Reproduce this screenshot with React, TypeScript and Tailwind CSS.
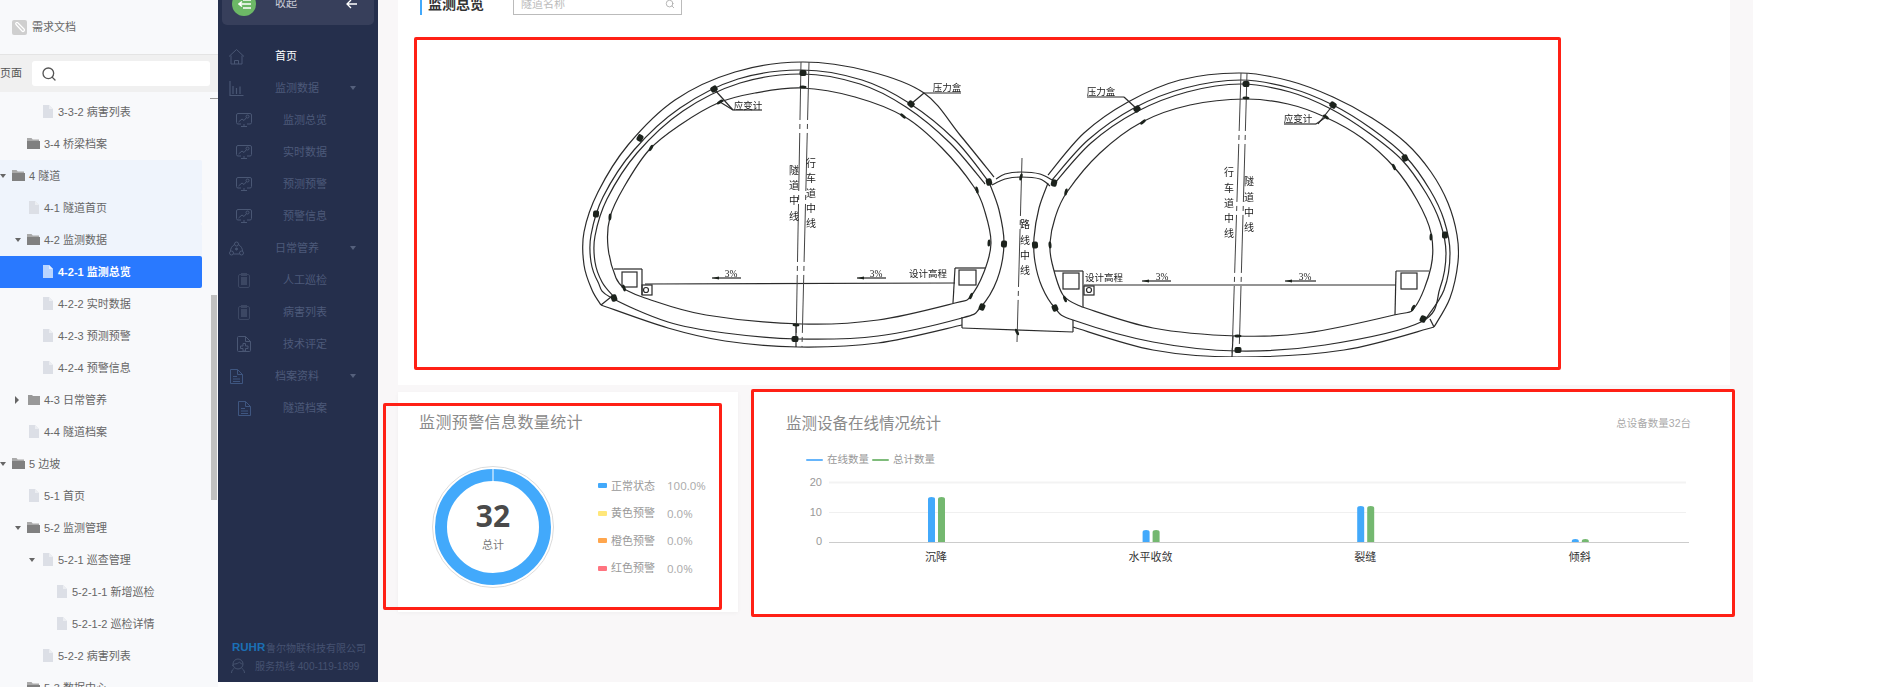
import React from 'react';
import { Search } from 'lucide-react';

const FONT = '"Liberation Sans", "Noto Sans CJK SC", sans-serif';
const SIDE = '#4a5774';

type TreeRow = {
  label: string;
  depth: number;
  kind: 'folder' | 'closed' | 'doc';
  caret?: 'down' | 'right';
  tint?: boolean;
  active?: boolean;
};

const treeRows: TreeRow[] = [
  { label: '3-3-2 病害列表', depth: 2, kind: 'doc' },
  { label: '3-4 桥梁档案', depth: 1, kind: 'folder' },
  { label: '4 隧道', depth: 0, kind: 'folder', caret: 'down', tint: true },
  { label: '4-1 隧道首页', depth: 1, kind: 'doc', tint: true },
  { label: '4-2 监测数据', depth: 1, kind: 'folder', caret: 'down', tint: true },
  { label: '4-2-1 监测总览', depth: 2, kind: 'doc', active: true },
  { label: '4-2-2 实时数据', depth: 2, kind: 'doc' },
  { label: '4-2-3 预测预警', depth: 2, kind: 'doc' },
  { label: '4-2-4 预警信息', depth: 2, kind: 'doc' },
  { label: '4-3 日常管养', depth: 1, kind: 'closed', caret: 'right' },
  { label: '4-4 隧道档案', depth: 1, kind: 'doc' },
  { label: '5 边坡', depth: 0, kind: 'folder', caret: 'down' },
  { label: '5-1 首页', depth: 1, kind: 'doc' },
  { label: '5-2 监测管理', depth: 1, kind: 'folder', caret: 'down' },
  { label: '5-2-1 巡查管理', depth: 2, kind: 'doc', caret: 'down' },
  { label: '5-2-1-1 新增巡检', depth: 3, kind: 'doc' },
  { label: '5-2-1-2 巡检详情', depth: 3, kind: 'doc' },
  { label: '5-2-2 病害列表', depth: 2, kind: 'doc' },
  { label: '5-3 数据中心', depth: 1, kind: 'folder' },
];

const depthClass = ['w-[29px]', 'w-[44px]', 'w-[58px]', 'w-[72px]'];

const TreeIcon = ({ kind, active }: { kind: TreeRow['kind']; active?: boolean }) => {
  if (kind === 'doc') {
    return (
      <svg width="10" height="13" viewBox="0 0 10 13" className="absolute right-[5px] top-[9px]">
        <path d="M0 0h6l4 4v9H0z" fill={active ? '#b9d5ff' : '#dcdfe6'} />
        <path d="M6 0l4 4H6z" fill={active ? '#e3eeff' : '#eceef2'} />
      </svg>
    );
  }
  if (kind === 'closed') {
    return (
      <svg width="12" height="11" viewBox="0 0 12 11" className="absolute right-[4px] top-[10px]">
        <path d="M0 1h4l1 1h7v9H0z" fill="#999" />
      </svg>
    );
  }
  return (
    <svg width="13" height="11" viewBox="0 0 13 11" className="absolute right-[4px] top-[10px]">
      <path d="M0 0h4.5l1.2 1.5H12V3H1v8H0z" fill="#aaa" />
      <path d="M0 3h13v8H0z" fill="#808080" />
    </svg>
  );
};

const Tree = () => (
  <div className="pt-[4px]">
    {treeRows.map((r) => (
      <div
        key={r.label}
        className={`flex items-center h-[32px] w-[202px] rounded-r-[2px] text-[11px] whitespace-nowrap ${
          r.active ? 'bg-[#2979ff] text-white font-bold' : r.tint ? 'bg-[#eff4fc] text-[#666]' : 'text-[#666]'
        }`}
      >
        <div className={`relative h-full shrink-0 ${depthClass[r.depth]}`}>
          <TreeIcon kind={r.kind} active={r.active} />
          {r.caret === 'down' && (
            <span className="absolute top-[14px] right-[23px] border-x-[3.5px] border-t-[4px] border-x-transparent border-t-[#666]" />
          )}
          {r.caret === 'right' && (
            <span className="absolute top-[12px] right-[25px] border-y-[4px] border-l-[4px] border-y-transparent border-l-[#666]" />
          )}
        </div>
        <span>{r.label}</span>
      </div>
    ))}
  </div>
);

const TreePanel = () => (
  <div className="relative w-[218px] h-[687px] shrink-0 overflow-hidden bg-[#f8f9fb]">
    <div className="flex items-center gap-[5px] h-[54px] pl-[12px] text-[11px] text-[#666]">
      <span className="flex items-center justify-center w-[15px] h-[15px] rounded-[2px] bg-[#cfcfcf]">
        <svg width="11" height="11" viewBox="0 0 11 11" fill="none" stroke="#fff" strokeWidth="1.2">
          <path d="M2 2.5l6 6.5a1.4 1.4 0 0 0 2-2L4 1a1 1 0 0 0-2 1.5" />
        </svg>
      </span>
      需求文档
    </div>
    <div className="flex items-center h-[38px] bg-[#f0f0f0] border-t border-[#e4e4e4] text-[11px] text-[#555]">
      <span className="w-[32px] shrink-0">页面</span>
      <div className="flex items-center w-[178px] h-[25px] rounded-[3px] bg-white pl-[9px]">
        <Search size={16} color="#555" strokeWidth={2} />
      </div>
    </div>
    <Tree />
    <div className="absolute left-[210px] top-[98px] w-[8px] h-px bg-[#999]" />
    <div className="absolute left-[211px] top-[295px] w-[6px] h-[205px] bg-[#c1c1c1]" />
  </div>
);

const IconHome = () => (
  <svg width="17" height="17" viewBox="0 0 17 17" fill="none" stroke={SIDE} strokeWidth="1">
    <path d="M1 8.5L8.5 1.5 16 8.5M3 7.5V16h11V7.5M6.5 16v-3.5h4V16" />
  </svg>
);
const IconBars = () => (
  <svg width="15" height="15" viewBox="0 0 15 15" fill="none" stroke={SIDE} strokeWidth="1.2">
    <path d="M1 0v14.5h13.5M4 5v8M7.5 7v6M11 5.5V13" />
  </svg>
);
const IconScreen = () => (
  <svg width="16" height="15" viewBox="0 0 16 15" fill="none" stroke={SIDE} strokeWidth="1">
    <path d="M5 11H2a1.5 1.5 0 0 1-1.500-1.500V2A1.5 1.5 0 0 1 2 .5h12A1.5 1.5 0 0 1 15.5 2v7.5A1.5 1.5 0 0 1 14 11h-3" />
    <path d="M2.5 9l3.5-3 2 1.5 2.500-3" />
    <circle cx="11.5" cy="3.5" r="1.5" />
    <path d="M5 13.5h6M8 11v2.5" />
  </svg>
);
const IconHub = () => (
  <svg width="15" height="15" viewBox="0 0 15 15" fill="none" stroke={SIDE} strokeWidth="1">
    <circle cx="7.5" cy="3" r="2" />
    <circle cx="2.5" cy="12" r="2" />
    <circle cx="12.5" cy="12" r="2" />
    <circle cx="7.5" cy="8" r="1" fill={SIDE} />
    <path d="M5.5 3.5C3 5 1.5 7.5 1.5 10M9.5 3.5C12 5 13.5 7.5 13.5 10M4.5 13h6" />
  </svg>
);
const IconClip = () => (
  <svg width="12" height="15" viewBox="0 0 12 15">
    <rect x="0.5" y="1.5" width="11" height="13" rx="1.5" fill="none" stroke="#3c4763" />
    <rect x="3" y="0" width="6" height="3" fill="#3c4763" />
    <rect x="3" y="4" width="6" height="8" fill="#3c4763" />
  </svg>
);
const IconPlus = () => (
  <svg width="14" height="16" viewBox="0 0 14 16" fill="none" stroke={SIDE} strokeWidth="1">
    <path d="M1.5.5h7l5 5v9a1 1 0 0 1-1 1h-11a1 1 0 0 1-1-1v-13a1 1 0 0 1 1-1zM8.5.5v5h5" />
    <path d="M6 7.5h2.5V10H11v2.5H8.5V15H6v-2.5H3.5V10H6z" />
  </svg>
);
const IconFile = ({ color }: { color: string }) => (
  <svg width="13" height="15" viewBox="0 0 13 15" fill="none" stroke={color} strokeWidth="1">
    <path d="M.5.5h7l5 5v9H.5zM7.5.5v5h5M3 7.5h4M3 10h7M3 12.5h7" />
  </svg>
);

const Caret = () => (
  <span className="absolute right-[22px] top-[14px] border-x-[3px] border-t-[4px] border-x-transparent border-t-[#55607c]" />
);

const navItems: { label: string; icon: React.ReactNode; sub?: boolean; caret?: boolean; home?: boolean }[] = [
  { label: '首页', icon: <IconHome />, home: true },
  { label: '监测数据', icon: <IconBars />, caret: true },
  { label: '监测总览', icon: <IconScreen />, sub: true },
  { label: '实时数据', icon: <IconScreen />, sub: true },
  { label: '预测预警', icon: <IconScreen />, sub: true },
  { label: '预警信息', icon: <IconScreen />, sub: true },
  { label: '日常管养', icon: <IconHub />, caret: true },
  { label: '人工巡检', icon: <IconClip />, sub: true },
  { label: '病害列表', icon: <IconClip />, sub: true },
  { label: '技术评定', icon: <IconPlus />, sub: true },
  { label: '档案资料', icon: <IconFile color="#3f5680" />, caret: true },
  { label: '隧道档案', icon: <IconFile color="#3f5680" />, sub: true },
];

const Sidebar = () => (
  <div className="flex flex-col w-[160px] h-[682px] shrink-0 bg-[#252f4c] text-[11px]">
    <div className="flex items-center mx-[4px] -mt-[18px] h-[43px] shrink-0 rounded-b-[5px] bg-[#373f5b] text-[#c9ccd6]">
      <span className="flex items-center justify-center ml-[10px] w-[24px] h-[24px] rounded-full bg-[#6cb866]">
        <svg width="13" height="10" viewBox="0 0 13 10" fill="none" stroke="#fff" strokeWidth="1.6">
          <path d="M5 1h8M1 5h12M5 9h8M4 2.5L1 5l3 2.5" />
        </svg>
      </span>
      <span className="ml-[19px]">收起</span>
      <svg width="12" height="10" viewBox="0 0 12 10" fill="none" stroke="#fff" strokeWidth="1.3" className="ml-[49px]">
        <path d="M11 5H1M5 1L1 5l4 4" />
      </svg>
    </div>
    <div className="pt-[15px]">
      {navItems.map((n) => (
        <div key={n.label} className="relative flex items-center h-[32px]">
          <div className={`flex justify-center shrink-0 ${n.sub ? 'w-[52px]' : 'w-[36px]'}`}>{n.icon}</div>
          <span className={`${n.sub ? 'ml-[13px]' : 'ml-[21px]'} ${n.home ? 'text-white' : 'text-[#4d5a7a]'}`}>{n.label}</span>
          {n.caret && <Caret />}
        </div>
      ))}
    </div>
    <div className="mt-auto pb-[7px] pl-[14px] text-[10px] text-[#465271]">
      <div className="flex items-center h-[16px] whitespace-nowrap">
        <span className="w-[34px] text-[11.5px] font-bold text-[#1b6fb5]">RUHR</span>
        <span>鲁尔物联科技有限公司</span>
      </div>
      <div className="flex items-center gap-[9px] h-[18px] mt-[1px] -ml-[2px] whitespace-nowrap">
        <svg width="16" height="16" viewBox="0 0 15 16" fill="none" stroke="#46536f" strokeWidth="1">
          <circle cx="7.5" cy="6" r="5" />
          <path d="M2 8c0-1 .5-2 2-2 2 0 4-1 5-2 .5 1 2 2 3 2M4 10c-1 1-3 2-3 5M11 10c1 1 3 2 3 5" />
        </svg>
        <span>服务热线 400-119-1899</span>
      </div>
    </div>
  </div>
);

// Catmull-Rom through the hand-read points of the drawing
const smooth = (pts: number[][]) => {
  let d = `M${pts[0][0]} ${pts[0][1]}`;
  for (let i = 0; i < pts.length - 1; i++) {
    const p0 = pts[i - 1] || pts[i];
    const p1 = pts[i];
    const p2 = pts[i + 1];
    const p3 = pts[i + 2] || p2;
    d += ` C${p1[0] + (p2[0] - p0[0]) / 6} ${p1[1] + (p2[1] - p0[1]) / 6} ${p2[0] - (p3[0] - p1[0]) / 6} ${p2[1] - (p3[1] - p1[1]) / 6} ${p2[0]} ${p2[1]}`;
  }
  return d;
};

const curves: number[][][] = [
  // left tunnel: outer lining, crown then invert
  [[994,177],[960,135],[924,93],[868,71],[802,62],[735,72],[675,100],[628,145],[598,192],[584,232],[584,265],[592,290],[601,305]],
  [[601,305],[668,328],[725,341],[798,347],[878,343],[962,325]],
  [[989,182],[955,140],[909,103],[862,80],[802,70],[738,79],[680,108],[634,150],[603,197],[591,235],[591,262],[598,282],[610,297],[668,322],[725,333],[798,339],[878,336],[962,318],[980,308],[997,280],[1004,244],[999,210],[989,182]],
  [[985,184],[950,143],[906,107],[860,84],[802,74],[740,83],[683,111],[637,153],[607,199],[595,236],[595,262],[602,282],[613,296]],
  // left tunnel: inner lining
  [[626,290],[645,298],[706,315],[802,324],[878,320],[955,303],[970,297],[984,272],[991,243],[985,212],[974,187],[942,148],[905,117],[855,97],[802,88],[755,93],[718,103],[680,125],[649,150],[624,187],[610,217],[608,247],[616,278],[626,290]],
  // middle arch
  [[996,179],[1005,174],[1021,172],[1040,174],[1052,180]],
  [[992,185],[1005,179],[1021,177],[1040,179],[1050,186]],
  // right tunnel: outer lining, crown then invert
  [[1048,175],[1084,133],[1128,102],[1180,80],[1241,73],[1290,81],[1333,97],[1372,118],[1406,143],[1431,172],[1448,203],[1457,235],[1458,262],[1450,298],[1434,327]],
  [[1434,327],[1344,350],[1237,357],[1153,350],[1073,327]],
  [[1052,180],[1088,140],[1134,108],[1185,88],[1241,80],[1290,88],[1333,105],[1372,129],[1406,157],[1430,190],[1444,220],[1450,253],[1444,290],[1425,320]],
  [[1054,184],[1091,143],[1136,112],[1187,92],[1241,84],[1290,92],[1331,109],[1369,133],[1402,160],[1426,193],[1440,222],[1446,253],[1440,288],[1421,322],[1325,345],[1237,351],[1153,342],[1073,320],[1055,308],[1042,287],[1035,262],[1034,238],[1039,208],[1048,183]],
  // right tunnel: inner lining
  [[1082,307],[1063,295],[1052,263],[1050,243],[1055,218],[1067,192],[1100,153],[1142,122],[1190,105],[1245,99],[1288,104],[1325,117],[1362,138],[1394,167],[1417,200],[1431,233],[1431,267],[1415,307],[1394,315],[1306,333],[1237,336],[1153,328],[1082,307]],
];

// straight bits: road, leaders, gutters, pillar
const lines: number[][] = [
  [645,284,955,283],[1084,285,1396,285],
  [911,104,924,93],[924,93,961,93],[714,89,733,110],[720,102,733,110],[733,110,762,110],
  [1087,97,1124,97],[1124,97,1137,109],[1333,105,1318,124],[1326,117,1316,124],[1284,124,1316,124],
  [712,278,741,278],[857,278,886,278],[1142,281,1171,281],[1285,281,1316,281],
  [614,269,642,269],[642,269,642,295],[955,268,985,268],[955,268,953,303],
  [1054,271,1083,271],[1083,271,1083,307],[1396,271,1429,271],[1396,271,1395,315],
  [962,317,962,328],[962,328,1073,332],[1073,332,1073,320],
  [601,305,611,297],[1434,327,1430,319],
  [796,325,796,347],[1233,336,1232,357],
];

const arrowTips = [[712,278],[857,278],[1142,281],[1285,281]];

const bigMarks = [[803,73],[714,89],[640,138],[596,214],[614,298],[911,104],[989,182],[795,339],[982,307],[1246,84],[1333,105],[1405,158],[1445,235],[1423,319],[1238,350],[1055,308],[1035,245],[1054,183],[1137,109],[1004,244]];
const smallMarks = [[803,87],[720,102],[651,148],[610,217],[903,116],[977,190],[989,243],[796,325],[971,296],[624,288],[1246,98],[1326,117],[1394,167],[1431,237],[1413,308],[1238,336],[1065,299],[1050,245],[1066,192],[1143,122],[1021,177],[1017,332]];

// marks sit along the lining, so turn them to the tangent of their tunnel
const tangent = (x: number, y: number) => {
  const cx = x < 1012 ? 802 : 1240;
  return (Math.atan2(y - 230, x - cx) * 180) / Math.PI + 90;
};

const drawingText: [string, number, number][] = [
  ['压力盒', 947, 87], ['应变计', 748, 105], ['压力盒', 1101, 91], ['应变计', 1298, 118],
  ['3%', 731, 273], ['3%', 876, 273], ['3%', 1162, 276], ['3%', 1305, 276],
  ['设计高程', 928, 273], ['设计高程', 1104, 277],
];

const verticalText: [string, number, number[]][] = [
  ['隧道中线', 794, [170, 185, 200, 216]],
  ['行车道中线', 811, [163, 178, 193, 208, 223]],
  ['行车道中线', 1229, [172, 188, 203, 218, 233]],
  ['隧道中线', 1249, [181, 197, 212, 227]],
  ['路线中线', 1025, [224, 240, 255, 270]],
];

const TunnelDrawing = () => (
  <svg width="1146" height="331" viewBox="414 38 1146 331" className="block ml-[16px] mt-[23px]">
    <defs>
      <filter id="scan" x="0" y="0" width="100%" height="100%">
        <feGaussianBlur stdDeviation="0.35" />
      </filter>
    </defs>
    <g filter="url(#scan)">
      <g fill="none" stroke="#2b2b2b" strokeWidth="1.2">
        {curves.map((c, i) => (
          <path key={i} d={smooth(c)} />
        ))}
        {lines.map((l, i) => (
          <line key={i} x1={l[0]} y1={l[1]} x2={l[2]} y2={l[3]} />
        ))}
        <g strokeDasharray="58 4 5 4" stroke="#444" strokeWidth="1">
          <line x1="801" y1="62" x2="796" y2="347" />
          <line x1="809" y1="62" x2="802" y2="347" />
          <line x1="1241" y1="73" x2="1232" y2="357" />
          <line x1="1247" y1="73" x2="1239" y2="357" />
          <line x1="1022" y1="158" x2="1017" y2="342" />
        </g>
        <rect x="622" y="272" width="15" height="15" />
        <rect x="642" y="285" width="10" height="10" />
        <circle cx="646" cy="290" r="2.5" />
        <rect x="959" y="270" width="17" height="15" />
        <rect x="1063" y="273" width="16" height="16" />
        <rect x="1084" y="286" width="10" height="9" />
        <circle cx="1089" cy="290" r="2.5" />
        <rect x="1401" y="273" width="16" height="16" />
      </g>
      <g fill="#1c241f">
        {bigMarks.map(([x, y], i) => (
          <rect key={i} x={x - 3.5} y={y - 3} width="7" height="6" rx="2" transform={`rotate(${tangent(x, y)} ${x} ${y})`} />
        ))}
        {smallMarks.map(([x, y], i) => (
          <ellipse key={i} cx={x} cy={y} rx="3.5" ry="1.5" transform={`rotate(${tangent(x, y)} ${x} ${y})`} />
        ))}
        {arrowTips.map(([x, y], i) => (
          <path key={i} d={`M${x} ${y}l7-1.5v3z`} />
        ))}
      </g>
      <g fontFamily='"Liberation Serif", "Noto Sans CJK SC", serif' fontSize="9.5" fill="#222" textAnchor="middle">
        {drawingText.map(([t, x, y], i) => (
          <text key={i} x={x} y={y + 3.5}>{t}</text>
        ))}
        {verticalText.flatMap(([t, x, ys]) =>
          ys.map((y, i) => (
            <text key={`${x}-${i}`} x={x} y={y + 3.5} fontSize="10">{t[i]}</text>
          ))
        )}
      </g>
    </g>
  </svg>
);

const legend = [
  { label: '正常状态', value: '100.0%', color: 'bg-[#42a9fb]' },
  { label: '黄色预警', value: '0.0%', color: 'bg-[#ffe77a]' },
  { label: '橙色预警', value: '0.0%', color: 'bg-[#ffa64d]' },
  { label: '红色预警', value: '0.0%', color: 'bg-[#ff7480]' },
];

const WarningCard = () => (
  <div className="w-[340px] h-[220px] shrink-0 bg-white shadow-[0_1px_4px_rgba(0,0,0,0.04)]">
    <div className="pt-[19px] pl-[21px] text-[16px] leading-[24px] tracking-[0.4px] text-[#8a8a8a]">监测预警信息数量统计</div>
    <div className="flex items-center mt-[31px]">
      <div className="relative ml-[34px] w-[122px] h-[122px] shrink-0">
        <svg width="122" height="122" viewBox="0 0 122 122">
          <circle cx="61" cy="61" r="60.5" fill="none" stroke="#dcdcdc" />
          <circle cx="61" cy="61" r="52" fill="none" stroke="#42a9fb" strokeWidth="12" />
          <line x1="61" y1="2" x2="61" y2="16" stroke="#fff" strokeWidth="1" />
        </svg>
        <div className="absolute inset-0 flex flex-col items-center pt-[32px]">
          <span className="text-[30px] leading-[36px] font-bold text-[#4a4a4a] font-['Open_Sans']">32</span>
          <span className="mt-[3px] text-[11px] leading-[16px] text-[#777]">总计</span>
        </div>
      </div>
      <div className="ml-[44px] text-[11px] text-[#999]">
        {legend.map((l) => (
          <div key={l.label} className="flex items-center h-[27.5px] whitespace-nowrap">
            <span className={`w-[9px] h-[5px] rounded-[1px] ${l.color}`} />
            <span className="ml-[4px] w-[56px]">{l.label}</span>
            <span className="font-['Open_Sans'] text-[11.5px] text-[#aaa]">{l.value}</span>
          </div>
        ))}
      </div>
    </div>
  </div>
);

const deviceData = [
  { name: '沉降', value: 15 },
  { name: '水平收敛', value: 4 },
  { name: '裂缝', value: 12 },
  { name: '倾斜', value: 1 },
];

const DeviceChart = () => (
  <svg width="900" height="100" viewBox="800 472 900 100" className="block ml-[48px]">
    <g fontSize="11" fill="#999" textAnchor="end" fontFamily={FONT}>
      <text x="822" y="486">20</text>
      <text x="822" y="516">10</text>
      <text x="822" y="545">0</text>
    </g>
    <line x1="829" y1="482.5" x2="1686" y2="482.5" stroke="#f3f3f3" strokeWidth="2" />
    <line x1="829" y1="512.5" x2="1686" y2="512.5" stroke="#f0f0f0" />
    <line x1="829" y1="542.5" x2="1689" y2="542.5" stroke="#ccc" />
    {deviceData.map((d, i) => {
      const cx = 936 + i * 214.6;
      const h = d.value * 3;
      return (
        <g key={d.name}>
          <path d={`M${cx - 8} 542v${-h + 2}a3.5 2 0 0 1 7 0v${h - 2}z`} fill="#42a9fb" />
          <path d={`M${cx + 2} 542v${-h + 2}a3.5 2 0 0 1 7 0v${h - 2}z`} fill="#74b870" />
          <text x={cx} y="561" fontSize="11" fill="#333" textAnchor="middle" fontFamily={FONT}>{d.name}</text>
        </g>
      );
    })}
  </svg>
);

const DeviceCard = () => (
  <div className="w-[980px] h-[222px] shrink-0 bg-white shadow-[0_1px_4px_rgba(0,0,0,0.04)]">
    <div className="flex items-center justify-between h-[24px] mt-[20px] pl-[34px] pr-[41px]">
      <span className="text-[15.5px] text-[#8a8a8a]">监测设备在线情况统计</span>
      <span className="text-[10.5px] text-[#aaa]">总设备数量32台</span>
    </div>
    <div className="flex items-center h-[14px] mt-[17px] ml-[54px] text-[10.5px] text-[#999]">
      <span className="w-[17px] h-[2px] rounded-full bg-[#66b5fb]" />
      <span className="ml-[4px] w-[45px]">在线数量</span>
      <span className="w-[17px] h-[2px] rounded-full bg-[#7fbc7b]" />
      <span className="ml-[4px]">总计数量</span>
    </div>
    <div className="mt-[5px]">
      <DeviceChart />
    </div>
  </div>
);

const Main = () => (
  <div className="relative w-[1375px] h-[682px] shrink-0 bg-[#f9f7f8] pl-[20px]">
    <div className="flex flex-col w-[1332px] h-[385px] bg-white">
      <div className="flex items-center -mt-[7px] h-[22px] ml-[22px] shrink-0">
        <span className="w-[2px] h-full bg-[#42a9fb]" />
        <span className="ml-[6px] w-[85px] text-[14px] font-bold text-[#333]">监测总览</span>
        <div className="flex items-center justify-between w-[169px] h-full border border-[#bbb] pl-[7px] pr-[6px] text-[11px] text-[#bbb]">
          隧道名称
          <Search size={10} color="#aaa" />
        </div>
      </div>
      <TunnelDrawing />
    </div>
    <div className="flex gap-[14px] mt-[7px]">
      <WarningCard />
      <DeviceCard />
    </div>
    {/* red review annotations laid over the page */}
    <div className="absolute left-[36px] top-[37px] w-[1147px] h-[333px] rounded-[2px] border-[3px] border-[#ff2015]" />
    <div className="absolute left-[5px] top-[403px] w-[339px] h-[207px] rounded-[2px] border-[3px] border-[#ff2015]" />
    <div className="absolute left-[373px] top-[389px] w-[984px] h-[228px] rounded-[2px] border-[3px] border-[#ff2015]" />
  </div>
);

export default function App() {
  return (
    <div className="flex w-[1893px] h-[687px] overflow-hidden bg-white" style={{ fontFamily: FONT }}>
      <TreePanel />
      <Sidebar />
      <Main />
    </div>
  );
}
